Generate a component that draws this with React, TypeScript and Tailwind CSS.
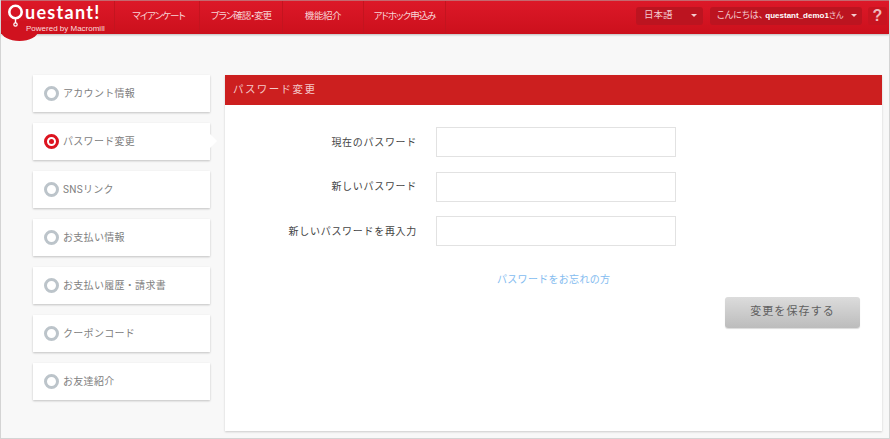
import React from 'react';

const jp = "font-['Roboto','Noto_Sans_CJK_JP',sans-serif]";

const navItems = [
  { label: 'マイアンケート', cls: 'w-[85px] pl-[3px] tracking-[-1px]' },
  { label: 'プラン確認・変更', cls: 'w-[83px] tracking-[-1px]' },
  { label: '機能紹介', cls: 'w-[81px] tracking-[-0.4px]' },
  { label: 'アドホック申込み', cls: 'w-[82px] tracking-[-1px]' },
];

const sideItems = ['アカウント情報', 'パスワード変更', 'SNSリンク', 'お支払い情報', 'お支払い履歴・請求書', 'クーポンコード', 'お友達紹介'];

const fields = ['現在のパスワード', '新しいパスワード', '新しいパスワードを再入力'];

const Caret = () => <span className="h-0 w-0 border-x-[3px] border-t-[3px] border-x-transparent border-t-[#f4ccd0]" />;

const App: React.FC = () => {
  return (
    <div className={`relative flex h-[439px] w-[890px] flex-col overflow-hidden border-x border-b border-[#d4d4d4] bg-[#f8f8f8] ${jp}`}>
      <header className="relative z-10 flex h-[34px] shrink-0 items-stretch border-t border-[#c4686f] bg-gradient-to-b from-[#dc1828] to-[#cc101c] shadow-[0_1px_2px_rgba(0,0,0,0.25)]">
        {/* logo */}
        <div className="relative w-[114px] shrink-0 border-r border-[#c4141f]">
          <div className="absolute left-0 top-[20px] h-[20px] w-[37px] rounded-b-[50%] bg-[#d0121f]" />
          <div className="absolute left-[7px] top-[3px] flex items-start">
            <svg width="15" height="23" viewBox="0 0 15 23" className="shrink-0">
              <circle cx="7.5" cy="8" r="6.2" fill="none" stroke="#fff" strokeWidth="2.6" />
              <circle cx="7.5" cy="20.5" r="1.7" fill="none" stroke="#fff" strokeWidth="1.2" />
              <path d="M7.5 14v5" stroke="#fff" strokeWidth="1.4" />
            </svg>
            <span className="ml-[2px] font-['Lato',sans-serif] text-[18px] font-bold leading-[16px] tracking-[1.3px] text-white">uestant!</span>
          </div>
          <span className="absolute left-[25px] top-[23px] whitespace-nowrap font-['Liberation_Sans',sans-serif] text-[8px] leading-[10px] text-[#fbdcdc]">Powered by Macromill</span>
        </div>
        {/* nav */}
        <nav className="flex">
          {navItems.map((item) => (
            <div key={item.label} className={`${item.cls} flex items-center justify-center whitespace-nowrap border-r border-[#c4141f] pb-[2px] text-[9.5px] text-[#f8d4d6] [font-feature-settings:'palt']`}>
              {item.label}
            </div>
          ))}
        </nav>
        <div className="ml-auto flex items-center pb-[4px] pr-[2px]">
          <div className="flex h-[18px] w-[67px] items-center justify-between rounded-[3px] bg-[#bc1420] pl-[8px] pr-[6px] text-[9.5px] text-[#f4ccd0]">
            日本語
            <Caret />
          </div>
          <div className="ml-[7px] flex h-[18px] w-[152px] items-center whitespace-nowrap rounded-[3px] bg-[#bc1420] pl-[7px] text-[9px] text-[#f4ccd0] [font-feature-settings:'palt']">
            こんにちは、
            <span className="ml-[2px] font-['Liberation_Sans',sans-serif] text-[8px] font-bold text-white">questant_demo1</span>
            <span className="text-[8px]">さん</span>
            <span className="ml-[8px] flex"><Caret /></span>
          </div>
          <div className="ml-[6px] flex h-[18px] w-[19px] items-center justify-center rounded-[3px] bg-[#c81420] font-['Liberation_Sans',sans-serif] text-[16px] font-bold text-[#f0b8bc]">?</div>
        </div>
      </header>

      <main className="flex flex-1 items-start pl-[32px] pr-[6px] pt-[41px]">
        <aside className="flex w-[177px] shrink-0 flex-col gap-[11px]">
          {sideItems.map((label, i) => {
            const active = i === 1;
            return (
              <div key={label} className="relative flex h-[37px] items-center bg-white pl-[11px] shadow-[0_1px_2px_rgba(0,0,0,0.22)]">
                {active ? (
                  <span className="flex h-[15px] w-[15px] items-center justify-center rounded-full border-[3px] border-[#dc1420] bg-white">
                    <span className="h-[5px] w-[5px] rounded-full bg-[#dc1420]" />
                  </span>
                ) : (
                  <span className="h-[15px] w-[15px] rounded-full border-[3px] border-[#bcc4ca] bg-white" />
                )}
                <span className="ml-[4px] text-[10px] tracking-[0.3px] text-[#808080]">{label}</span>
                {active && (
                  <span className="absolute left-full top-[11px] h-0 w-0 border-y-[7.5px] border-l-[7px] border-y-transparent border-l-white" />
                )}
              </div>
            );
          })}
        </aside>

        <section className="ml-[15px] flex h-[356px] w-[657px] flex-col bg-white shadow-[0_1px_2px_rgba(0,0,0,0.18)]">
          <h2 className="flex h-[30px] shrink-0 items-center bg-[#cc1f1f] pl-[8px] text-[10.5px] font-normal tracking-[1.4px] text-[#f4c8c8]">パスワード変更</h2>
          <div className="flex flex-col pt-[22px]">
            {fields.map((label) => (
              <div key={label} className="mb-[14.5px] flex h-[30px] items-center">
                <label className="w-[192px] text-right text-[10px] tracking-[0.7px] text-[#444444]">{label}</label>
                <input type="text" className="ml-[19px] h-[30px] w-[240px] border border-[#e2e2e2] bg-white" />
              </div>
            ))}
            <a className="ml-[272px] mt-[12px] text-[10px] leading-[14px] tracking-[0.3px] text-[#84bcf0]">パスワードをお忘れの方</a>
            <div className="mt-[10px] flex justify-end pr-[22px]">
              <button className="h-[31px] w-[135px] rounded-[3px] bg-gradient-to-b from-[#dcdcdc] to-[#bcbcbc] text-[11px] tracking-[1.1px] text-[#606060] shadow-[0_1px_1px_rgba(0,0,0,0.15)]">変更を保存する</button>
            </div>
          </div>
        </section>
      </main>
    </div>
  );
};

export default App;
